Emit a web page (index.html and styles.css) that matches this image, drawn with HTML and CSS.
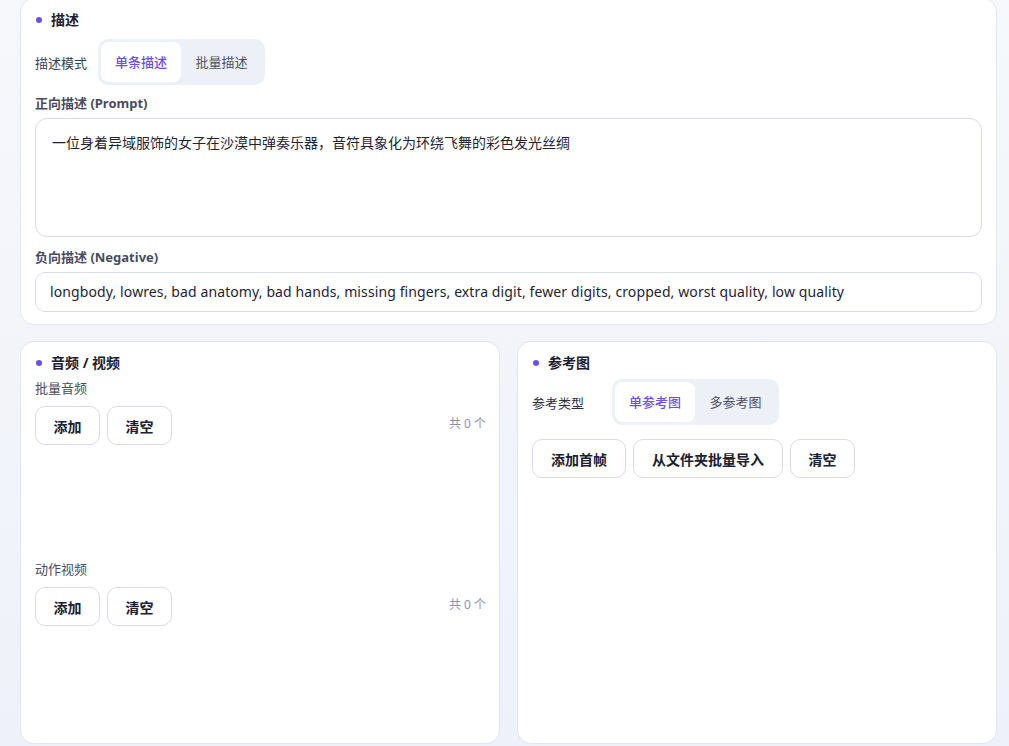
FILE: index.html
```html
<html>
<head>
<meta charset="utf-8">
<link rel="stylesheet" href="styles.css">
</head>
<body>

<div class="page">

  <section class="card card-desc">
    <div class="card-title"><span class="dot"></span>描述</div>

    <div class="mode-row">
      <span class="row-label">描述模式</span>
      <div class="segment">
        <span class="seg-item active">单条描述</span>
        <span class="seg-item">批量描述</span>
      </div>
    </div>

    <div class="field-label">正向描述 (Prompt)</div>
    <div class="textarea">一位身着异域服饰的女子在沙漠中弹奏乐器，音符具象化为环绕飞舞的彩色发光丝绸</div>

    <div class="field-label">负向描述 (Negative)</div>
    <div class="input">longbody, lowres, bad anatomy, bad hands, missing fingers, extra digit, fewer digits, cropped, worst quality, low quality</div>
  </section>

  <div class="columns">

    <section class="card">
      <div class="card-title"><span class="dot"></span>音频 / 视频</div>

      <div class="media-block">
        <div class="sub-label">批量音频</div>
        <div class="btn-row">
          <button class="btn">添加</button>
          <button class="btn">清空</button>
          <span class="count">共 0 个</span>
        </div>
      </div>

      <div class="media-block">
        <div class="sub-label">动作视频</div>
        <div class="btn-row">
          <button class="btn">添加</button>
          <button class="btn">清空</button>
          <span class="count">共 0 个</span>
        </div>
      </div>
    </section>

    <section class="card">
      <div class="card-title"><span class="dot"></span>参考图</div>

      <div class="mode-row ref-mode">
        <span class="row-label">参考类型</span>
        <div class="segment">
          <span class="seg-item active">单参考图</span>
          <span class="seg-item">多参考图</span>
        </div>
      </div>

      <div class="btn-row">
        <button class="btn wide">添加首帧</button>
        <button class="btn wide">从文件夹批量导入</button>
        <button class="btn">清空</button>
      </div>
    </section>

  </div>
</div>

</body>
</html>
```

FILE: styles.css
```css
html, body {
  margin: 0;
  height: 100%;
}

body {
  background: linear-gradient(180deg, #f7f8fc 0%, #eef1f9 100%);
  font-family: "Noto Sans", "Noto Sans CJK SC", sans-serif;
  color: #1f2333;
  overflow: hidden;
}

.page {
  padding: 0 12px 0 20px;
  height: 746px;
  display: flex;
  flex-direction: column;
  gap: 16px;
  box-sizing: border-box;
}

.card {
  background: #fff;
  border: 1px solid #e3e6f0;
  border-radius: 14px;
  padding: 10px 14px 14px;
  box-sizing: border-box;
  min-height: 0;
  overflow: hidden;
}

.card-desc {
  margin-top: -2px;
  padding-top: 11px;
  padding-bottom: 12px;
}

.card-title {
  display: flex;
  align-items: center;
  font-size: 14px;
  font-weight: 700;
  line-height: 20px;
  color: #1c2030;
}

.dot {
  width: 6px;
  height: 6px;
  border-radius: 50%;
  background: #6b4ef6;
  margin: 0 9px 0 1px;
}

.mode-row {
  display: flex;
  align-items: center;
  margin-top: 9px;
}

.row-label {
  font-size: 13px;
  color: #3a3f52;
  width: 63px;
}

.segment {
  display: flex;
  background: #eef0f7;
  border-radius: 10px;
  padding: 3px;
}

.seg-item {
  width: 81px;
  height: 40px;
  line-height: 40px;
  text-align: center;
  font-size: 13px;
  color: #4b5064;
  border-radius: 8px;
}

.seg-item.active {
  width: 80px;
  background: #fff;
  color: #6b4ef6;
  font-weight: 500;
}

.field-label {
  font-size: 13px;
  font-weight: 700;
  color: #474c60;
  margin-top: 8px;
  line-height: 20px;
}

.textarea {
  margin-top: 5px;
  height: 119px;
  border: 1px solid #d9dcea;
  border-radius: 12px;
  padding: 14px 16px;
  box-sizing: border-box;
  font-size: 14px;
  line-height: 20px;
  color: #1f2333;
}

.card-desc .field-label + .input {
  margin-top: 5px;
}

.textarea + .field-label {
  margin-top: 10px;
}

.input {
  height: 40px;
  border: 1px solid #d9dcea;
  border-radius: 10px;
  padding: 0 14px;
  box-sizing: border-box;
  line-height: 38px;
  font-size: 14px;
  letter-spacing: 0.11px;
  color: #1f2333;
  white-space: nowrap;
  overflow: hidden;
}

.columns {
  flex: 1;
  min-height: 0;
  display: grid;
  grid-template-columns: 1fr 1fr;
  gap: 17px;
  margin-bottom: 2px;
}

.columns .card {
  padding-top: 11px;
}

.media-block {
  height: 181px;
  box-sizing: border-box;
  padding-top: 5px;
}

.media-block:last-child {
  height: auto;
}

.sub-label {
  font-size: 13px;
  color: #474c60;
  line-height: 20px;
  margin: 0 0 8px;
}

.btn-row {
  display: flex;
  align-items: center;
  gap: 7px;
}

.btn {
  font-family: inherit;
  font-size: 14px;
  font-weight: 700;
  color: #1c2030;
  background: #fff;
  border: 1px solid #d9dcea;
  border-radius: 10px;
  height: 39px;
  width: 65px;
  padding: 0;
}

.btn.wide {
  width: auto;
  padding: 0 18px;
}

.count {
  margin-left: auto;
  margin-right: -1px;
  margin-bottom: 6px;
  font-size: 12px;
  color: #8b93aa;
}

.ref-mode {
  margin-top: 6px;
  margin-bottom: 14px;
}

.ref-mode .row-label {
  width: 80px;
  color: #2b3040;
}
```
